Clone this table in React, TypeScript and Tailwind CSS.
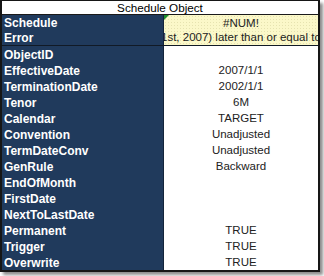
const fields: [string, string][] = [
  ['ObjectID', ''],
  ['EffectiveDate', '2007/1/1'],
  ['TerminationDate', '2002/1/1'],
  ['Tenor', '6M'],
  ['Calendar', 'TARGET'],
  ['Convention', 'Unadjusted'],
  ['TermDateConv', 'Unadjusted'],
  ['GenRule', 'Backward'],
  ['EndOfMonth', ''],
  ['FirstDate', ''],
  ['NextToLastDate', ''],
  ['Permanent', 'TRUE'],
  ['Trigger', 'TRUE'],
  ['Overwrite', 'TRUE'],
];

const labelFont = { fontFamily: '"Liberation Sans", Arial, sans-serif' };

export default function App() {
  return (
    <div className="w-[324px] h-[276px] bg-white" style={labelFont}>
      <div className="w-[320px] h-[272px] flex flex-col border-l-2 border-r-2 border-b-2 border-t border-[#161616] shadow-[3px_3px_3px_rgba(0,0,0,0.45)]">
        {/* title */}
        <div className="h-[14px] flex items-center justify-center text-[11.7px] text-black leading-none border-b border-[#1a1a1a] bg-white">
          Schedule Object
        </div>

        {/* handle + error */}
        <div className="h-[31px] flex border-b border-[#111a26]">
          <div className="w-[162px] bg-[#203a5c] border-r border-[#13243a] flex flex-col text-white font-bold text-[12px] leading-none">
            <div className="flex-1 flex items-center pl-[2px] pt-[1px]">Schedule</div>
            <div className="flex-1 flex items-center pl-[2px]">Error</div>
          </div>
          <div className="relative flex-1 overflow-hidden bg-[#fbf8c9] bg-[radial-gradient(#e6e3b0_0.6px,transparent_0.8px)] bg-[length:3px_3px] flex flex-col text-[11.5px] text-[#222] leading-none">
            <div className="absolute left-0 top-0 w-0 h-0 border-t-[5px] border-r-[5px] border-t-[#1d8f2c] border-r-transparent" />
            <div className="flex-1 flex items-center justify-center pt-[1px]">#NUM!</div>
            <div className="flex-1 flex items-center whitespace-nowrap ml-[-3px]">
              1st, 2007) later than or equal to termination date
            </div>
          </div>
        </div>

        {/* parameters */}
        <div className="flex-1 flex">
          <div className="w-[162px] bg-[#203a5c] border-r border-[#13243a] flex flex-col text-white font-bold text-[12px] leading-none">
            {fields.map(([name]) => (
              <div key={name} className="flex-1 flex items-center pl-[2px] pt-[1px]">
                {name}
              </div>
            ))}
          </div>
          <div className="flex-1 flex flex-col bg-white text-[11.5px] text-[#222] leading-none">
            {fields.map(([name, value]) => (
              <div key={name} className="flex-1 flex items-center justify-center pt-[1px]">
                {value}
              </div>
            ))}
          </div>
        </div>
      </div>
    </div>
  );
}
